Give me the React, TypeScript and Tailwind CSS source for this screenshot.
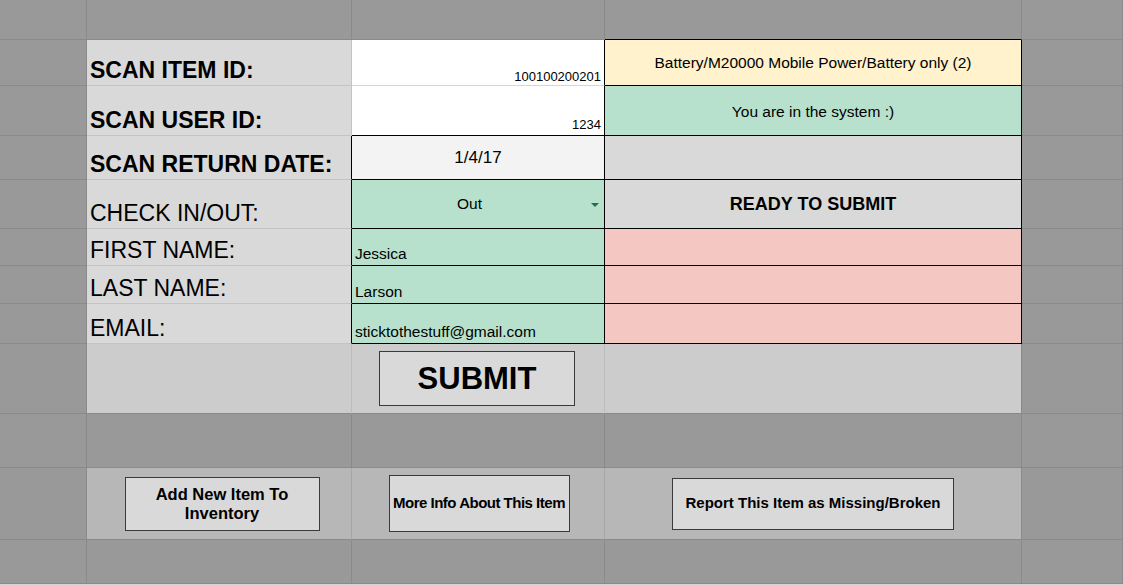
import type { ReactNode } from 'react';

const font = "font-['Liberation_Sans',Arial,Helvetica,sans-serif]";

// plain gray filler cell outside the form
function Dark({ extra = '' }: { extra?: string }) {
  return <div className={`bg-[#999999] border-r border-b border-[#8a8a8a] ${extra}`} />;
}

function Label({ children, bold = false, edge = 'border-r-[#c3c3c3]' }: { children: ReactNode; bold?: boolean; edge?: string }) {
  return (
    <div
      className={`bg-[#d9d9d9] border-r border-b border-b-[#c3c3c3] ${edge} flex items-end pl-[3px] pb-[2px] text-[23px] leading-[26px] whitespace-nowrap ${bold ? 'font-bold' : ''}`}
    >
      {children}
    </div>
  );
}

function GreenText({ children }: { children: ReactNode }) {
  return (
    <div className="bg-[#b7e1cd] border-r border-b border-black flex items-end pl-[3px] pb-[3px] text-[15.5px] leading-[17px] whitespace-nowrap">
      {children}
    </div>
  );
}

function Pink() {
  return <div className="bg-[#f4c7c3] border-r border-b border-black" />;
}

export default function App() {
  return (
    <div className={`w-[1123px] h-[585px] overflow-hidden bg-[#999999] text-black ${font}`}>
      <div className="grid grid-cols-[87px_265px_253px_417px_101px] grid-rows-[40px_46px_50px_44px_49px_37px_38px_40px_70px_54px_72px_44px]">
        {/* row 1 */}
        <Dark />
        <Dark />
        <Dark />
        <Dark extra="border-b-black" />
        <Dark />

        {/* row 2 */}
        <Dark />
        <Label bold>SCAN ITEM ID:</Label>
        <div className="bg-white border-r border-b border-r-black border-b-[#d6d6d6] flex items-end justify-end pr-[3px] pb-[1px] text-[13px] leading-[15px]">
          100100200201
        </div>
        <div className="bg-[#fff2cc] border-r border-b border-black flex items-center justify-center text-[15.5px] whitespace-nowrap">
          Battery/M20000 Mobile Power/Battery only (2)
        </div>
        <Dark />

        {/* row 3 */}
        <Dark />
        <Label bold>SCAN USER ID:</Label>
        <div className="bg-white border-r border-b border-black flex items-end justify-end pr-[3px] pb-[3px] text-[13px] leading-[15px]">
          1234
        </div>
        <div className="bg-[#b7e1cd] border-r border-b border-black flex items-center justify-center pt-[2px] text-[15.5px]">
          You are in the system :)
        </div>
        <Dark />

        {/* row 4 */}
        <Dark />
        <Label bold edge="border-r-black">SCAN RETURN DATE:</Label>
        <div className="bg-[#f3f3f3] border-r border-b border-black flex items-center justify-center text-[17px]">
          1/4/17
        </div>
        <div className="bg-[#d9d9d9] border-r border-b border-black" />
        <Dark />

        {/* row 5 */}
        <Dark />
        <Label edge="border-r-black">CHECK IN/OUT:</Label>
        <div className="bg-[#b7e1cd] border-r border-b border-black flex items-center">
          <span className="flex-1 text-center text-[15.5px]">Out</span>
          <svg width="8" height="4" viewBox="0 0 8 4" className="mr-[5px] ml-[4px] mt-[1px]">
            <polygon points="0,0 8,0 4,4" fill="#2b6b4b" />
          </svg>
        </div>
        <div className="bg-[#d9d9d9] border-r border-b border-black flex items-center justify-center font-bold text-[18px]">
          READY TO SUBMIT
        </div>
        <Dark />

        {/* row 6 */}
        <Dark />
        <Label edge="border-r-black">FIRST NAME:</Label>
        <GreenText>Jessica</GreenText>
        <Pink />
        <Dark />

        {/* row 7 */}
        <Dark />
        <Label edge="border-r-black">LAST NAME:</Label>
        <GreenText>Larson</GreenText>
        <Pink />
        <Dark />

        {/* row 8 */}
        <Dark />
        <Label edge="border-r-black">EMAIL:</Label>
        <GreenText>sticktothestuff@gmail.com</GreenText>
        <Pink />
        <Dark />

        {/* row 9 - submit */}
        <Dark />
        <div className="bg-[#cccccc] border-r border-b border-r-[#bdbdbd] border-b-[#8a8a8a]" />
        <div className="bg-[#cccccc] border-r border-b border-r-[#bdbdbd] border-b-[#8a8a8a] flex items-center justify-center pr-[2px]">
          <button className="w-[196px] h-[55px] bg-[#d9d9d9] border border-[#3a3a3a] font-bold text-[31px] leading-none">
            SUBMIT
          </button>
        </div>
        <div className="bg-[#cccccc] border-r border-b border-r-[#8a8a8a] border-b-[#8a8a8a]" />
        <Dark />

        {/* row 10 */}
        <Dark />
        <Dark />
        <Dark />
        <Dark />
        <Dark />

        {/* row 11 - actions */}
        <Dark />
        <div className="bg-[#b7b7b7] border-r border-b border-r-[#a6a6a6] border-b-[#8a8a8a] flex items-center justify-center pl-[6px]">
          <button className="w-[195px] h-[54px] bg-[#d9d9d9] border border-[#3a3a3a] font-bold text-[16.5px] leading-[19px]">
            Add New Item To
            <br />
            Inventory
          </button>
        </div>
        <div className="bg-[#b7b7b7] border-r border-b border-r-[#a6a6a6] border-b-[#8a8a8a] flex items-center justify-center pl-[2px]">
          <button className="w-[181px] h-[57px] bg-[#d9d9d9] border border-[#3a3a3a] font-bold text-[15px] tracking-[-0.5px] whitespace-nowrap">
            More Info About This Item
          </button>
        </div>
        <div className="bg-[#b7b7b7] border-r border-b border-r-[#8a8a8a] border-b-[#8a8a8a] flex items-center justify-center">
          <button className="w-[282px] h-[52px] bg-[#d9d9d9] border border-[#3a3a3a] font-bold text-[15px] whitespace-nowrap">
            Report This Item as Missing/Broken
          </button>
        </div>
        <Dark />

        {/* row 12 */}
        <Dark />
        <Dark />
        <Dark />
        <Dark />
        <Dark />
      </div>
      <div className="h-px bg-[#d4d4d4]" />
    </div>
  );
}
